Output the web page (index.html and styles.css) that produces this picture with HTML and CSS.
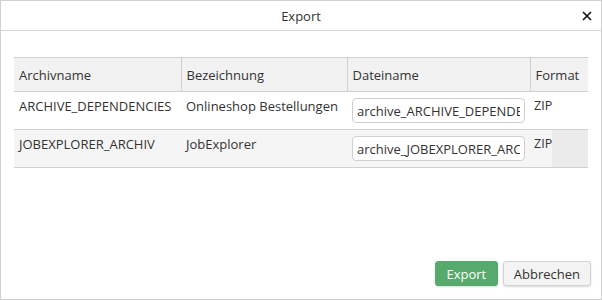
FILE: index.html
```html
<!DOCTYPE html>
<html lang="de">
<head>
    <meta charset="UTF-8">
    <title>Export</title>
    <link rel="stylesheet" href="styles.css">
</head>
<body>

    <div class="dialog">
        <div class="dialog-header">
            <span class="dialog-title">Export</span>
            <button class="close-btn" title="Schließen">
                <svg width="10" height="10" viewBox="0 0 10 10">
                    <path d="M1 1 L9 9 M9 1 L1 9" stroke="#111" stroke-width="1.6" fill="none"/>
                </svg>
            </button>
        </div>

        <div class="dialog-body">
            <table class="export-table">
                <colgroup>
                    <col class="col-name">
                    <col class="col-desc">
                    <col class="col-file">
                    <col class="col-format">
                    <col class="col-rest">
                </colgroup>
                <thead>
                    <tr>
                        <th>Archivname</th>
                        <th>Bezeichnung</th>
                        <th>Dateiname</th>
                        <th colspan="2">Format</th>
                    </tr>
                </thead>
                <tbody>
                    <tr>
                        <td>ARCHIVE_DEPENDENCIES</td>
                        <td>Onlineshop Bestellungen</td>
                        <td class="file-cell"><input type="text" value="archive_ARCHIVE_DEPENDENCIES"></td>
                        <td class="format-cell">ZIP</td>
                        <td class="rest-cell"></td>
                    </tr>
                    <tr class="odd">
                        <td>JOBEXPLORER_ARCHIV</td>
                        <td>JobExplorer</td>
                        <td class="file-cell"><input type="text" value="archive_JOBEXPLORER_ARCHIV"></td>
                        <td class="format-cell">ZIP</td>
                        <td class="rest-cell"></td>
                    </tr>
                </tbody>
            </table>
        </div>

        <div class="dialog-footer">
            <button class="btn btn-primary">Export</button>
            <button class="btn">Abbrechen</button>
        </div>
    </div>

</body>
</html>
```

FILE: styles.css
```css
body {
    margin: 0;
    font-family: "Open Sans", "Liberation Sans", sans-serif;
    font-size: 13px;
    color: #333;
    background: white;
}
.dialog {
    width: 602px;
    height: 300px;
    box-sizing: border-box;
    border: 1px solid #d0d0d0;
    display: flex;
    flex-direction: column;
}
.dialog-header {
    height: 29px;
    border-bottom: 1px solid #d6d6d6;
    display: flex;
    align-items: center;
    justify-content: center;
    position: relative;
}
.dialog-title {
    font-size: 13px;
    color: #333;
}
.close-btn {
    position: absolute;
    right: 9px;
    top: 10px;
    width: 10px;
    height: 10px;
    padding: 0;
    border: none;
    background: none;
    display: flex;
}
.dialog-body {
    flex: 1;
    padding: 26px 13px 0 13px;
}
.export-table {
    width: 574px;
    border-collapse: collapse;
    table-layout: fixed;
    border-top: 1px solid #d0d0d0;
}
.col-name { width: 167px; }
.col-desc { width: 166px; }
.col-file { width: 183px; }
.col-format { width: 22px; }
.col-rest { width: 36px; }
.export-table th {
    height: 33px;
    padding: 0 5px;
    text-align: left;
    font-weight: normal;
    background: #f2f2f2;
    border-bottom: 1px solid #d0d0d0;
    border-left: 1px solid #d0d0d0;
    white-space: nowrap;
    overflow: hidden;
}
.export-table th:first-child {
    border-left: none;
}
.export-table td {
    height: 38px;
    box-sizing: border-box;
    padding: 5px 5px 0 5px;
    vertical-align: top;
    border-bottom: 1px solid #d0d0d0;
    white-space: nowrap;
    overflow: hidden;
    line-height: 18px;
}
.export-table tr.odd td {
    background: #f5f5f5;
}
.export-table td.file-cell {
    padding-top: 6px;
}
.file-cell input {
    width: 173px;
    height: 25px;
    box-sizing: border-box;
    margin: 0;
    padding: 0 4px;
    border: 1px solid #cfcfcf;
    border-radius: 4px;
    font-family: inherit;
    font-size: 13px;
    color: #333;
    background: white;
}
.export-table td.format-cell {
    padding: 5px 0 0 4px;
    font-size: 12.5px;
    overflow: visible;
}
.export-table tr.odd td.rest-cell {
    background: #ebebeb;
}
.dialog-footer {
    display: flex;
    justify-content: flex-end;
    gap: 5px;
    padding: 0 10px 13px 0;
}
.btn {
    height: 25px;
    padding: 0 10px;
    font-family: inherit;
    font-size: 13px;
    color: #333;
    background: #f3f3f3;
    border: 1px solid #d2d2d2;
    border-radius: 3px;
    box-shadow: 0 1px 2px rgba(0, 0, 0, 0.15);
    cursor: pointer;
}
.btn-primary {
    width: 63px;
    background: #57a96c;
    border-color: #57a96c;
    color: white;
}
```
